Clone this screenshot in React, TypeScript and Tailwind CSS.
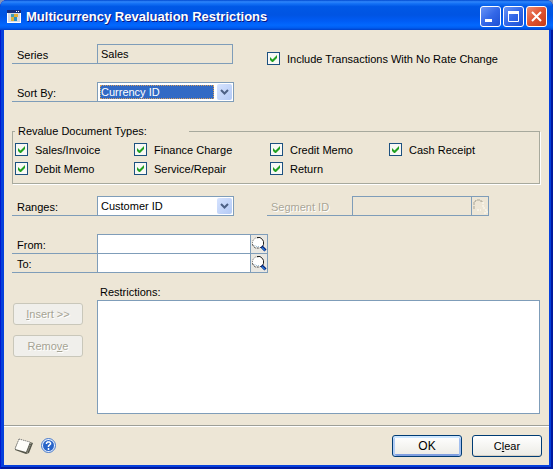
import type { ReactNode } from "react";

function LookupIcon({ disabled = false }: { disabled?: boolean }) {
  if (disabled) {
    return (
      <svg width="16" height="16" viewBox="0 0 16 16" fill="none" aria-hidden="true">
        <path d="M2 11V4h1V3h1V2h4v1h2v1" stroke="#aaa697" strokeDasharray="3 1" />
        <path d="M11 4v5M5 12h4M12 9v2M13 12h2v3h-3" stroke="#fffdf5" strokeDasharray="2 1" />
      </svg>
    );
  }
  return (
    <svg width="16" height="16" viewBox="0 0 16 16" fill="none" aria-hidden="true">
      <circle cx="7" cy="7" r="5" fill="#fff" />
      <path d="M1.500 9V5.500l1-2L4.500 2h3" stroke="#888" strokeDasharray="1 1" />
      <path d="M6 1.500h3L11.500 3.500 12.500 5.500v3l-1 2" stroke="#222" />
      <path d="M1.500 8.500l1 2 2 1.500h4l2-1" stroke="#444" strokeDasharray="2 1" />
      <path d="M3.500 9l1.500 1.500h3" stroke="#8fb5cf" strokeDasharray="1 1" />
      <path d="M10.500 10.500l4 4" stroke="#001c70" strokeWidth="3" />
      <path d="M11 11.500l3 3" stroke="#2878d8" strokeWidth="1.500" />
    </svg>
  );
}

function Check({ label, id }: { label: string; id: string }) {
  return (
    <div className="flex h-[13px] items-center gap-[7px]">
      <span className="relative block size-[13px] shrink-0">
        <input
          id={id}
          type="checkbox"
          defaultChecked
          className="peer block size-[13px] appearance-none border border-[#1c5180] bg-[#f8f8f5]"
        />
        <svg
          className="pointer-events-none absolute inset-0 hidden peer-checked:block"
          width="13"
          height="13"
          viewBox="0 0 13 13"
          aria-hidden="true"
        >
          <path d="M3 5v3l2 2h1l4-4V3L5.500 7.500z" fill="#21a121" />
        </svg>
      </span>
      <label htmlFor={id} className="whitespace-nowrap">
        {label}
      </label>
    </div>
  );
}

function FieldRow({ id, label, children }: { id: string; label: string; children: ReactNode }) {
  return (
    <div className="flex h-5">
      <label htmlFor={id} className="flex w-[85px] shrink-0 items-end border-b border-[#7f9db9] pl-[5px]">
        {label}
      </label>
      {children}
    </div>
  );
}

function DropDown({ id, options, active = false }: { id: string; options: string[]; active?: boolean }) {
  return (
    <div className="flex w-[137px] border border-[#7f9db9] bg-white p-px">
      <select
        id={id}
        className={
          active
            ? "m-px min-w-0 flex-1 appearance-none border border-dotted border-[#d8a05c] bg-[#316ac5] leading-3 text-white outline-none"
            : "m-px min-w-0 flex-1 appearance-none border border-transparent bg-white leading-3 text-black outline-none"
        }
      >
        {options.map((option) => (
          <option key={option}>{option}</option>
        ))}
      </select>
      <span className="ml-[2px] flex w-[15px] items-center justify-center rounded-[2px] bg-linear-to-br from-[#d6e3fe] to-[#b3c9f5]">
        <svg width="9" height="7" viewBox="0 0 9 7" fill="none" aria-hidden="true">
          <path d="M1 1l3.500 3.500L8 1" stroke="#4d6185" strokeWidth="2" />
        </svg>
      </span>
    </div>
  );
}

function LookupField({ id, label }: { id: string; label: string }) {
  return (
    <FieldRow id={id} label={label}>
      <input id={id} className="w-[154px] border border-[#7f9db9] bg-white px-1 outline-none" />
      <button
        type="button"
        aria-label={"Look up " + label}
        className="flex w-[17px] items-center justify-center border border-l-0 border-[#7f9db9] bg-[#e9e7e1]"
      >
        <LookupIcon />
      </button>
    </FieldRow>
  );
}

function TitleButton({ name, close = false, children }: { name: string; close?: boolean; children: ReactNode }) {
  return (
    <button
      type="button"
      aria-label={name}
      className={
        close
          ? "size-[21px] rounded-[3px] border border-white bg-linear-to-br from-[#ee8b70] via-[#df5230] to-[#c53b16]"
          : "size-[21px] rounded-[3px] border border-white bg-linear-to-br from-[#6a94f5] via-[#3468e8] to-[#1c50d4]"
      }
    >
      <svg width="19" height="19" viewBox="0 0 19 19" fill="none" stroke="#fff" aria-hidden="true">
        {children}
      </svg>
    </button>
  );
}

const disabledButton =
  "h-[22px] w-[70px] rounded-[3px] border border-[#c9c7ba] bg-[#f0efeb] text-[#a5a393] [text-shadow:1px_1px_0_#fff]";

const documentTypes = [
  "Sales/Invoice",
  "Finance Charge",
  "Credit Memo",
  "Cash Receipt",
  "Debit Memo",
  "Service/Repair",
  "Return",
];

export default function App() {
  return (
    <div className="bg-[#8494b8]">
      <main className="flex min-h-screen flex-col overflow-hidden rounded-t-[7px] bg-[#0540dc] font-['Liberation_Sans',Arial,sans-serif] text-[11px] leading-4 text-black shadow-[inset_1px_0_0_#0019cf,inset_-2px_-2px_0_#0019a0]">
        <header className="flex h-[30px] shrink-0 items-center bg-[linear-gradient(#0048cf_0%,#2f86fb_6%,#1471f5_12%,#0058e6_22%,#0054e3_50%,#005cf5_70%,#0268fe_84%,#005cf0_93%,#0040c8_100%)] pt-[3px] pr-[6px] pl-[7px]">
          <svg width="14" height="13" viewBox="0 0 14 13" aria-hidden="true">
            <path d="M0 0h14v13H0z" fill="#fff" />
            <path d="M1 1h12v11H1z" fill="#d6d9e4" />
            <path d="M0 0h14v3H0z" fill="#162e80" />
            <path d="M9 1h1v1H9zM11 1h1v1h-1z" fill="#fff" />
            <path d="M4 4h3v3H4z" fill="#3f9bbb" />
            <path d="M7 4h4v3H7z" fill="#e5ae32" />
            <path d="M4 7h3v4H4z" fill="#d9b23d" />
            <path d="M7 7h3v4H7z" fill="#2a8fc1" />
          </svg>
          <h1 className="ml-[5px] flex-1 text-[13px] font-bold whitespace-nowrap text-white [text-shadow:1px_1px_0_#0a1883]">
            Multicurrency Revaluation Restrictions
          </h1>
          <div className="flex gap-[2px]">
            <TitleButton name="Minimize">
              <path d="M4 13.500h7" strokeWidth="3" />
            </TitleButton>
            <TitleButton name="Maximize">
              <path d="M4 5.500h11" strokeWidth="3" />
              <path d="M4.500 5v9.500h10V5" />
            </TitleButton>
            <TitleButton name="Close" close>
              <path d="M5 5l9 9M14 5l-9 9" strokeWidth="2" />
            </TitleButton>
          </div>
        </header>

        <form className="mx-1 mb-1 flex flex-1 flex-col bg-[#ede6d6]">
          <div className="flex flex-1 flex-col pt-[14px] pr-[9px] pb-[11px] pl-2">
            <div className="grid grid-cols-[255px_1fr]">
              <div className="flex flex-col gap-[18px]">
                <FieldRow id="series" label="Series">
                  <input
                    id="series"
                    readOnly
                    defaultValue="Sales"
                    className="w-[136px] border border-[#7f9db9] bg-transparent px-[3px] outline-none"
                  />
                </FieldRow>
                <FieldRow id="sort" label="Sort By:">
                  <DropDown id="sort" active options={["Currency ID", "Customer ID"]} />
                </FieldRow>
              </div>
              <div className="pt-2">
                <Check id="no-rate-change" label="Include Transactions With No Rate Change" />
              </div>
            </div>

            <fieldset className="mt-[21px] border border-[#a7a99d] pb-2 pl-[2px] shadow-[1px_1px_0_#fff]">
              <legend className="w-[174px] pl-[3px]">Revalue Document Types:</legend>
              <div className="grid grid-cols-[119px_136px_119px_1fr] gap-y-[6px] pt-1">
                {documentTypes.map((type) => (
                  <Check key={type} id={type} label={type} />
                ))}
              </div>
            </fieldset>

            <div className="mt-3 grid grid-cols-[255px_1fr]">
              <FieldRow id="ranges" label="Ranges:">
                <DropDown id="ranges" options={["Customer ID", "Customer Name"]} />
              </FieldRow>
              <div className="flex h-5 text-[#aaa697]">
                <label
                  htmlFor="segment"
                  className="flex w-[85px] items-end border-b border-[#7f9db9] pl-1 [text-shadow:1px_1px_0_#fff]"
                >
                  Segment ID
                </label>
                <input id="segment" disabled className="w-[120px] border border-[#7f9db9] bg-transparent px-1" />
                <button
                  type="button"
                  disabled
                  aria-label="Look up segment"
                  className="flex w-[17px] items-center justify-center border border-l-0 border-[#7f9db9]"
                >
                  <LookupIcon disabled />
                </button>
              </div>
            </div>

            <div className="mt-[18px] flex flex-col -space-y-px">
              <LookupField id="from" label="From:" />
              <LookupField id="to" label="To:" />
            </div>

            <div className="mt-[11px] grid flex-1 grid-cols-[85px_1fr]">
              <div className="flex flex-col gap-[10px] pt-[19px] pl-px">
                <button type="button" disabled className={disabledButton}>
                  <u>I</u>nsert &gt;&gt;
                </button>
                <button type="button" disabled className={disabledButton}>
                  Remo<u>v</u>e
                </button>
              </div>
              <div className="flex flex-col">
                <label htmlFor="restrictions" className="pl-[3px]">
                  Restrictions:
                </label>
                <select
                  id="restrictions"
                  multiple
                  className="min-h-[114px] w-full flex-1 appearance-none border border-[#7f9db9] bg-white outline-none"
                />
              </div>
            </div>
          </div>

          <footer className="flex h-10 shrink-0 items-center border-t border-[#9d9f98] pr-[7px] pl-[10px] shadow-[inset_0_1px_0_#fff]">
            <button type="button" aria-label="Notes">
              <svg width="20" height="16" viewBox="0 0 20 16" aria-hidden="true">
                <path d="M5 1l14 4-4 10-3 1L1 12v-2z" fill="#55564a" />
                <path d="M5 1l11 3-4 10L1 11z" fill="#fffefa" />
                <path d="M5 1l11 3M5 1L1 11" stroke="#777" strokeDasharray="1 1" />
                <path d="M17 5l-4 10" stroke="#c2c0b2" strokeDasharray="1 1" />
              </svg>
            </button>
            <button type="button" aria-label="Help" className="ml-[7px]">
              <svg width="15" height="15" viewBox="0 0 15 15" fill="none" aria-hidden="true">
                <circle cx="7.500" cy="7.500" r="7" fill="#e8f0ff" stroke="#4779c9" />
                <circle cx="7.500" cy="7.500" r="5.500" fill="#2864c8" />
                <path d="M5.500 6V5l1-1h2l1 1v1l-2 2v1M7.500 10v2" stroke="#fff" strokeWidth="1.500" />
              </svg>
            </button>
            <div className="ml-auto flex gap-[10px]">
              <button
                type="submit"
                className="h-[22px] w-[70px] rounded-[3px] border border-[#003c74] bg-linear-to-b from-white to-[#ecebe5] text-[12px] shadow-[inset_0_2px_0_#cee7ff,inset_2px_0_0_#b2cdf5,inset_-2px_0_0_#a2bff0,inset_0_-2px_0_#7f9fe0]"
              >
                OK
              </button>
              <button
                type="reset"
                className="h-[22px] w-[70px] rounded-[3px] border border-[#003c74] bg-linear-to-b from-white to-[#ecebe5] shadow-[inset_0_-1px_0_#d6d0c5]"
              >
                C<u>l</u>ear
              </button>
            </div>
          </footer>
        </form>
      </main>
    </div>
  );
}
